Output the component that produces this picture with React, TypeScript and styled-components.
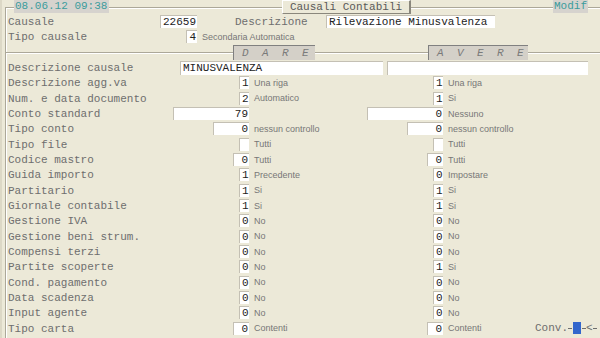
import React from "react";
import styled, { createGlobalStyle } from "styled-components";

const Global = createGlobalStyle`
  html, body { margin: 0; padding: 0; background: #ECE9D8; }
  #root { width: 600px; height: 338px; }
`;

const ROW_H = "15.33px";

const Screen = styled.div`
  width: 600px;
  height: 338px;
  overflow: hidden;
  background: #ECE9D8;
  border-left: 2px solid #DCD8C6;
  box-sizing: border-box;
  font-family: "Liberation Mono", "Courier New", monospace;
  font-size: 11px;
  color: #6e6e6e;
  display: flex;
  flex-direction: column;
`;

const TopBar = styled.div`
  display: flex;
  height: 14px;
  flex: none;
`;

const Gap = styled.div<{ $w: number }>`
  width: ${(p) => p.$w}px;
  flex: none;
`;

const Corner = styled.div`
  width: 8px;
  flex: none;
  margin-top: 7px;
  border-top: 1px solid #ACA899;
  border-left: 1px solid #ACA899;
  box-shadow: inset 1px 1px 0 #fff;
`;

const Rule = styled.div<{ $w?: number; $top: number }>`
  ${(p) => (p.$w ? `width: ${p.$w}px; flex: none;` : "flex: 1;")}
  height: 0;
  margin-top: ${(p) => p.$top}px;
  border-top: 1px solid #ACA899;
  border-bottom: 1px solid #fff;
`;

const Badge = styled.div<{ $w: number }>`
  width: ${(p) => p.$w}px;
  flex: none;
  height: 13px;
  line-height: 13px;
  background: #D6D3CE;
  color: #3C9C9C;
  padding-left: 1px;
  box-sizing: border-box;
  white-space: nowrap;
`;

const TitleButton = styled.div`
  width: 129px;
  flex: none;
  height: 14px;
  line-height: 13px;
  box-sizing: border-box;
  text-align: center;
  color: #5a5a5a;
  background: #ECE9D8;
  border-left: 1px solid #fff;
  border-top: 1px solid #fff;
  border-right: 2px solid #8a877c;
  border-bottom: 1px solid #8a877c;
  white-space: nowrap;
`;

const Body = styled.div`
  flex: 1;
  margin-left: 3px;
  border-left: 1px solid #ACA899;
  box-shadow: inset 1px 0 0 #fff;
  display: flex;
  flex-direction: column;
`;

const Row = styled.div`
  height: ${ROW_H};
  flex: none;
  display: flex;
  align-items: center;
  padding-left: 2px;
  white-space: nowrap;
`;

const Label = styled.span<{ $w?: number }>`
  ${(p) => (p.$w ? `width: ${p.$w}px; flex: none;` : "")}
  color: #6e6e6e;
  padding-top: 1px;
`;

const Field = styled.div<{ $w: number; $h?: number; $left?: boolean }>`
  width: ${(p) => p.$w}px;
  height: ${(p) => p.$h ?? 13}px;
  flex: none;
  box-sizing: border-box;
  background: #fff;
  border-left: 1px solid #C4C0B4;
  border-top: 1px solid #C4C0B4;
  color: #222;
  line-height: ${(p) => (p.$h ?? 13) - 1}px;
  text-align: ${(p) => (p.$left ? "left" : "right")};
  padding: 0 1px 0 2px;
  overflow: hidden;
`;

const Note = styled.span`
  font-family: "Liberation Sans", Arial, sans-serif;
  font-size: 9px;
  color: #777;
  white-space: nowrap;
`;

const HeaderRow = styled.div`
  height: ${ROW_H};
  flex: none;
  display: flex;
  align-items: flex-start;
`;

const SideTab = styled.div<{ $w: number }>`
  width: ${(p) => p.$w}px;
  flex: none;
  height: 15px;
  margin-top: 0.5px;
  box-sizing: border-box;
  background: #D4D0C8;
  border-left: 1px solid #808080;
  border-top: 1px solid #808080;
  padding-left: 8px;
  display: flex;
  align-items: center;
`;

const TabLetter = styled.span`
  width: 20px;
  flex: none;
  font-style: italic;
  color: #7a7a7a;
`;

const GridRow = styled.div`
  height: ${ROW_H};
  flex: none;
  display: grid;
  grid-template-columns: 243px 194px 1fr;
  align-items: center;
  white-space: nowrap;
`;

const LeftCell = styled.div`
  display: flex;
  align-items: center;
  justify-content: space-between;
  padding-left: 2px;
`;

const MidCell = styled.div`
  display: flex;
  align-items: center;
  justify-content: space-between;
  padding-left: 5px;
`;

const RightCell = styled.div`
  display: flex;
  align-items: center;
  padding-left: 5px;
`;

const ConvGroup = styled.div`
  margin-left: auto;
  width: 65px;
  flex: none;
  display: flex;
  align-items: center;
  overflow: hidden;
  color: #6e6e6e;
`;

const Cursor = styled.div`
  width: 8px;
  height: 12px;
  flex: none;
  background: #3366CC;
`;

const Dash = styled.div`
  width: 4px;
  flex: none;
  height: 1px;
  background: #6e6e6e;
`;

type Side = { v: string; w?: number; d: string };
type RowData = { label: string; l: Side; r: Side };

const rows: RowData[] = [
  { label: "Descrizione agg.va", l: { v: "1", d: "Una riga" }, r: { v: "1", d: "Una riga" } },
  { label: "Num. e data documento", l: { v: "2", d: "Automatico" }, r: { v: "1", d: "Si" } },
  { label: "Conto standard", l: { v: "79", w: 76, d: "" }, r: { v: "0", w: 76, d: "Nessuno" } },
  { label: "Tipo conto", l: { v: "0", w: 36, d: "nessun controllo" }, r: { v: "0", w: 36, d: "nessun controllo" } },
  { label: "Tipo file", l: { v: "", d: "Tutti" }, r: { v: "", d: "Tutti" } },
  { label: "Codice mastro", l: { v: "0", w: 16, d: "Tutti" }, r: { v: "0", w: 16, d: "Tutti" } },
  { label: "Guida importo", l: { v: "1", d: "Precedente" }, r: { v: "0", d: "Impostare" } },
  { label: "Partitario", l: { v: "1", d: "Si" }, r: { v: "1", d: "Si" } },
  { label: "Giornale contabile", l: { v: "1", d: "Si" }, r: { v: "1", d: "Si" } },
  { label: "Gestione IVA", l: { v: "0", d: "No" }, r: { v: "0", d: "No" } },
  { label: "Gestione beni strum.", l: { v: "0", d: "No" }, r: { v: "0", d: "No" } },
  { label: "Compensi terzi", l: { v: "0", d: "No" }, r: { v: "0", d: "No" } },
  { label: "Partite scoperte", l: { v: "0", d: "No" }, r: { v: "1", d: "Si" } },
  { label: "Cond. pagamento", l: { v: "0", d: "No" }, r: { v: "0", d: "No" } },
  { label: "Data scadenza", l: { v: "0", d: "No" }, r: { v: "0", d: "No" } },
  { label: "Input agente", l: { v: "0", d: "No" }, r: { v: "0", d: "No" } },
  { label: "Tipo carta", l: { v: "0", w: 16, d: "Contenti" }, r: { v: "0", w: 16, d: "Contenti" } },
];

export default function App() {
  return (
    <>
      <Global />
      <Screen>
        <TopBar>
          <Gap $w={3} />
          <Corner />
          <Badge $w={95}>08.06.12 09:38</Badge>
          <Rule $top={7} $w={173} />
          <TitleButton>Causali Contabili</TitleButton>
          <Rule $top={7} />
          <Badge $w={35}>Modif</Badge>
          <Rule $top={7} $w={12} />
        </TopBar>
        <Body>
          <Row>
            <Label $w={152}>Causale</Label>
            <Field $w={37}>22659</Field>
            <Gap $w={38} />
            <Label $w={91}>Descrizione</Label>
            <Field $w={169} $left>Rilevazione Minusvalenza</Field>
          </Row>
          <Row>
            <Label $w={178}>Tipo causale</Label>
            <Field $w={11}>4</Field>
            <Gap $w={5} />
            <Note>Secondaria Automatica</Note>
          </Row>
          <HeaderRow>
            <Rule $w={227} $top={7} />
            <SideTab $w={82}>
              {"DARE".split("").map((c, i) => (
                <TabLetter key={i}>{c}</TabLetter>
              ))}
            </SideTab>
            <Rule $w={113} $top={7} />
            <SideTab $w={100}>
              {"AVERE".split("").map((c, i) => (
                <TabLetter key={i}>{c}</TabLetter>
              ))}
            </SideTab>
            <Rule $top={7} />
          </HeaderRow>
          <Row>
            <Label $w={172}>Descrizione causale</Label>
            <Field $w={203} $h={14} $left>MINUSVALENZA</Field>
            <Gap $w={4} />
            <Field $w={201} $h={14} $left></Field>
          </Row>
          {rows.map((r, i) => (
            <GridRow key={r.label}>
              <LeftCell>
                <Label>{r.label}</Label>
                <Field $w={r.l.w ?? 10}>{r.l.v}</Field>
              </LeftCell>
              <MidCell>
                <Note>{r.l.d}</Note>
                <Field $w={r.r.w ?? 10}>{r.r.v}</Field>
              </MidCell>
              <RightCell>
                <Note>{r.r.d}</Note>
                {i === rows.length - 1 && (
                  <ConvGroup>
                    <span>Conv.</span>
                    <Dash />
                    <Gap $w={1} />
                    <Cursor />
                    <Gap $w={1} />
                    <Dash />
                    <span>&lt;</span>
                    <Dash />
                  </ConvGroup>
                )}
              </RightCell>
            </GridRow>
          ))}
        </Body>
      </Screen>
    </>
  );
}
